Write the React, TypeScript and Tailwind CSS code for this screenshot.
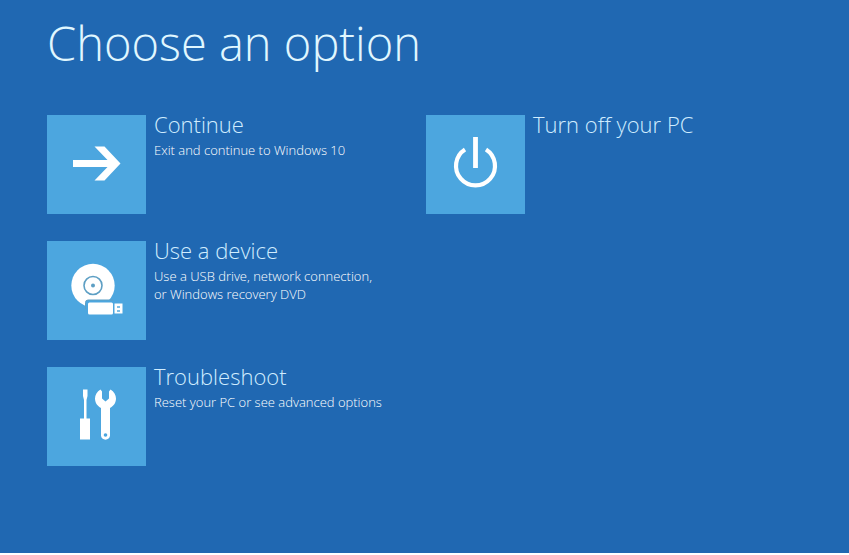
import type { ReactNode } from "react";

type Option = {
  title: string;
  lines: string[];
  icon: ReactNode;
};

const ArrowIcon = () => (
  <svg viewBox="0 0 99 99" className="size-full" fill="#fff" aria-hidden="true">
    <path d="M26 45H60.500L47.500 31.500H57.500L73.500 48.500L57.500 65.500H47.500L60.500 52H26Z" />
  </svg>
);

const DiscIcon = () => (
  <svg viewBox="0 0 99 99" className="size-full" aria-hidden="true">
    <circle cx="46" cy="44.500" r="21.700" fill="#fff" />
    <circle cx="46" cy="44.500" r="9" fill="none" stroke="#5d9fc4" strokeWidth="1.600" />
    <circle cx="46" cy="44.500" r="2" fill="#5d9fc4" />
    <path d="M38.500 70V61.500Q38.500 59 41 59H69V75H38.500Z" fill="#4ca6df" />
    <path d="M38.500 68V61.500Q38.500 59 41 59H66" fill="none" stroke="#5d9fc4" strokeWidth="1" />
    <rect x="41" y="61.500" width="25" height="12" rx="1.500" fill="#fff" />
    <rect x="67.500" y="62.500" width="8" height="10" fill="#fff" />
    <path d="M70 65H73V67H70ZM70 69H73V71H70Z" fill="#7fbfe6" />
  </svg>
);

const ToolsIcon = () => (
  <svg viewBox="0 0 99 99" className="size-full" fill="#fff" aria-hidden="true">
    <path d="M36 22.500H40.500V29L39.500 33V51.500H43V72.500H33V51.500H37V33L36 29Z" />
    <path d="M53.500 22.500C50 24.500 48 28 48 31.500C48 36 50.500 39 54 41V68.500C54 74 63 74 63 68.500V41C66.500 39 69 36 69 31.500C69 28 67 24.500 63.500 22.500L62 24.500V31.500L58.500 34.500L55 31.500V24.500Z" />
    <circle cx="58.500" cy="68" r="1.800" fill="#4ca6df" />
  </svg>
);

const PowerIcon = () => (
  <svg viewBox="0 0 99 99" className="size-full" fill="none" stroke="#fff" aria-hidden="true">
    <path d="M49.500 22V53" strokeWidth="4.800" />
    <path d="M39 34.500A19.500 19.500 0 1 0 60 34.500" strokeWidth="4.200" />
  </svg>
);

const COLUMNS: Option[][] = [
  [
    { title: "Continue", lines: ["Exit and continue to Windows 10"], icon: <ArrowIcon /> },
    {
      title: "Use a device",
      lines: ["Use a USB drive, network connection,", "or Windows recovery DVD"],
      icon: <DiscIcon />,
    },
    { title: "Troubleshoot", lines: ["Reset your PC or see advanced options"], icon: <ToolsIcon /> },
  ],
  [{ title: "Turn off your PC", lines: [], icon: <PowerIcon /> }],
];

function OptionButton({ title, lines, icon }: Option) {
  return (
    <button type="button" className="flex items-start gap-2 text-left">
      <span className="size-[99px] shrink-0 bg-[#4ca6df]">{icon}</span>
      <span className="flex flex-col whitespace-nowrap">
        <span className="text-[22px] leading-[18px] text-[#d0edff]">{title}</span>
        <span className="mt-2 flex flex-col text-[13px] leading-[18px] text-white">
          {lines.map((line) => (
            <span key={line}>{line}</span>
          ))}
        </span>
      </span>
    </button>
  );
}

export default function App() {
  return (
    <main className="min-h-screen border-b-2 border-white bg-[#2068b2] pt-4 pl-[47px] font-['Open_Sans','Noto_Sans',sans-serif] font-light">
      <h1 className="text-[47px] leading-[54px] font-light text-[#e0f7ff]">Choose an option</h1>
      <div className="mt-[45px] grid grid-cols-[379px_auto] items-start">
        {COLUMNS.map((options) => (
          <div key={options[0].title} className="flex flex-col gap-[27px]">
            {options.map((option) => (
              <OptionButton key={option.title} {...option} />
            ))}
          </div>
        ))}
      </div>
    </main>
  );
}
